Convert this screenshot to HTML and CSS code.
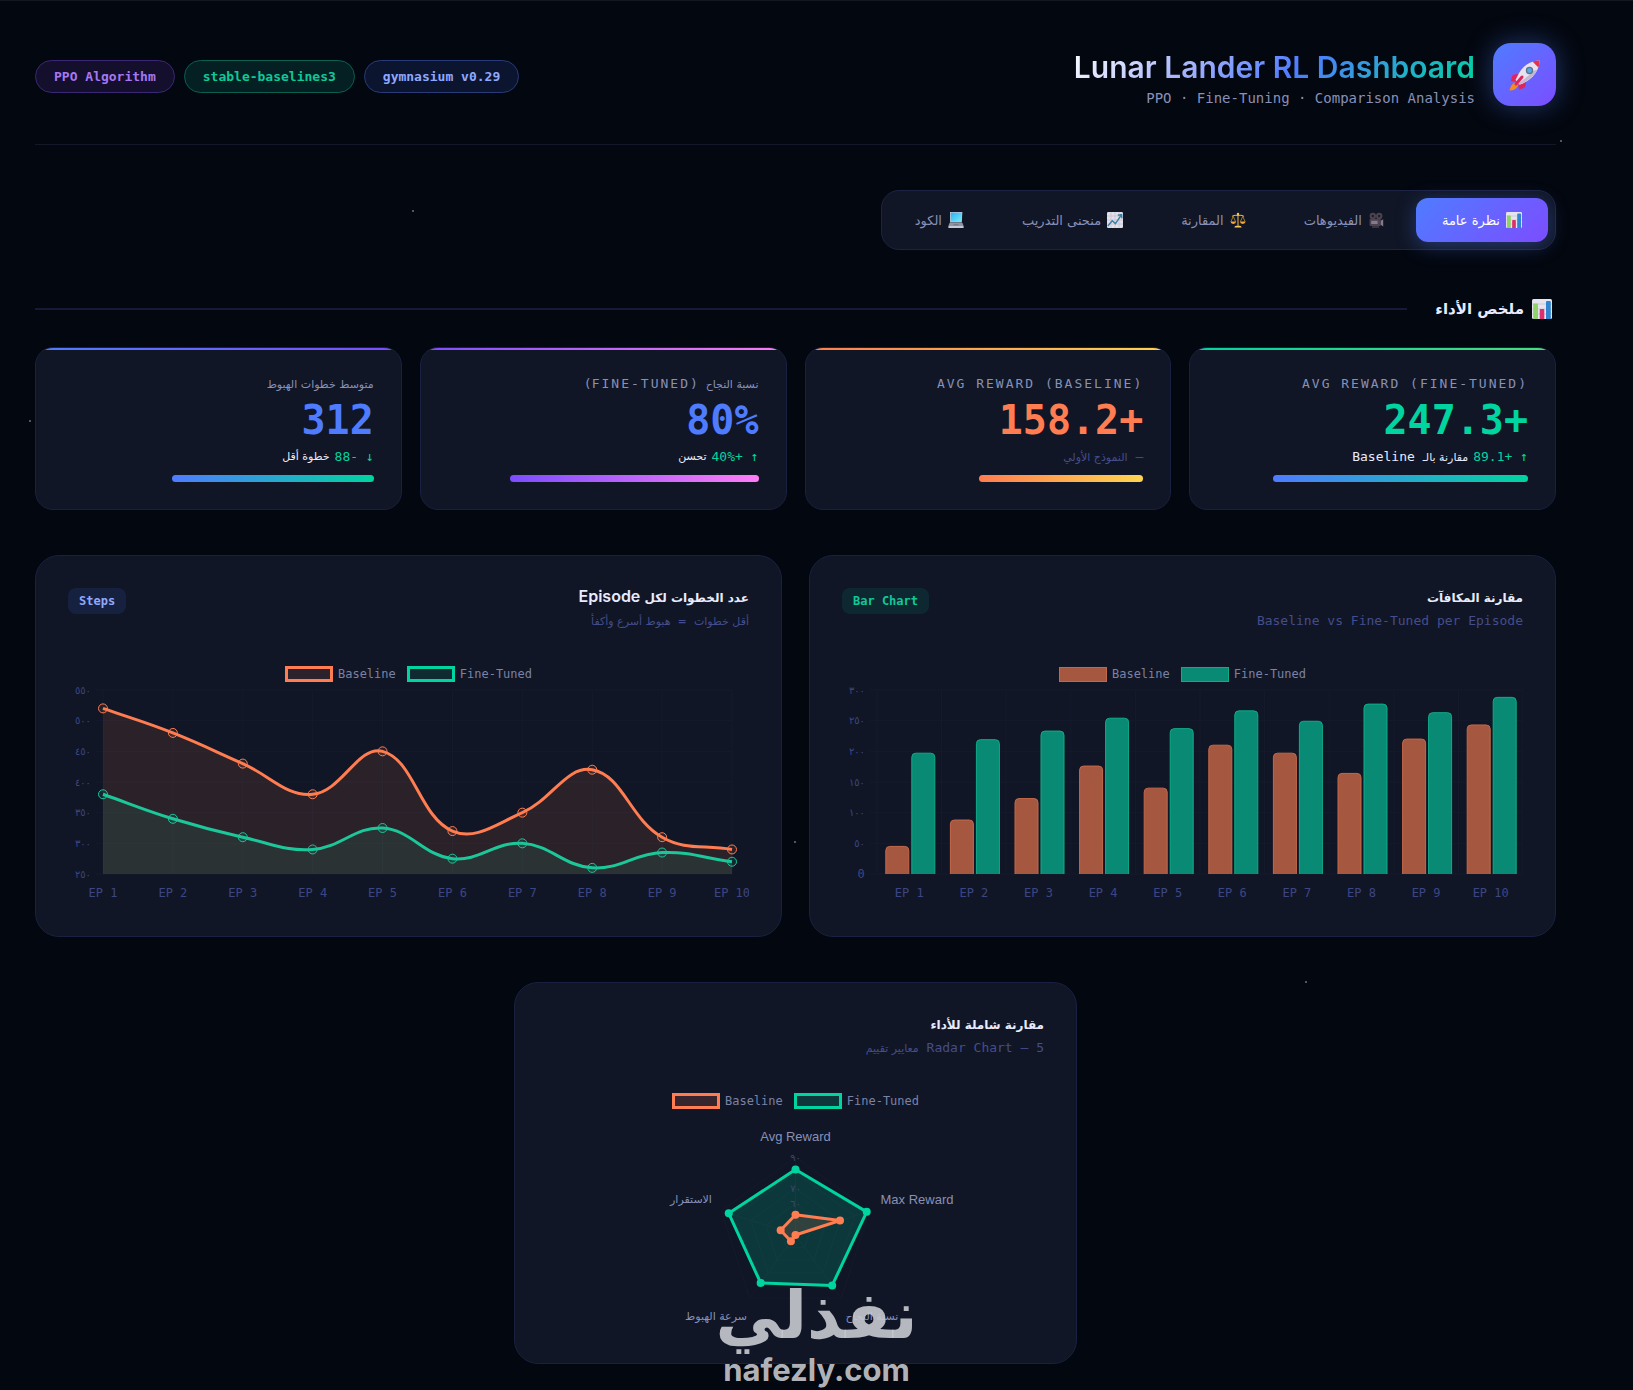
FILE: index.html
```html
<!DOCTYPE html>
<html lang="ar" dir="rtl">
<head>
<meta charset="utf-8">
<meta name="viewport" content="width=device-width, initial-scale=1">
<title>Lunar Lander RL Dashboard</title>
<link rel="stylesheet" href="styles.css">
</head>
<body>
<svg class="defs" width="0" height="0" aria-hidden="true">
  <defs>
    <linearGradient id="screen" x1="0" y1="0" x2="1" y2="1"><stop offset="0" stop-color="#27b4f5"/><stop offset="1" stop-color="#7fe6f7"/></linearGradient>
    <symbol id="icon-bars" viewBox="0 0 20 20">
      <rect width="20" height="20" rx="1.5" fill="#e6e4ee"/>
      <path d="M0 5h20M0 10h20M0 15h20" stroke="#c6c3d4" stroke-width=".8"/>
      <path d="M1.2 20V5.5Q1.2 4.5 2.2 4.5H5Q6 4.500 6 5.500V20z" fill="#8fd16a"/>
      <path d="M7.700 20v-9q0-1 1-1h2.600q1 0 1 1v9z" fill="#dc2f6e"/>
      <path d="M14 20V3q0-1 1-1h2.800q1 0 1 1v17z" fill="#2d86cf"/>
    </symbol>
    <symbol id="icon-camera" viewBox="0 0 20 20">
      <circle cx="6" cy="5" r="4" fill="#4c4250"/><circle cx="14" cy="5" r="4" fill="#4c4250"/>
      <circle cx="6" cy="5" r="1.500" fill="#211d28"/><circle cx="14" cy="5" r="1.500" fill="#211d28"/>
      <rect x="2" y="8.500" width="14" height="9" rx="1.500" fill="#4c4352"/>
      <rect x="4" y="11" width="8" height="4" fill="#857b8b"/>
      <path d="M16 11l3-2v9l-3-2z" fill="#857b8b"/><path d="M5 17.500h9V20H5z" fill="#3a3340"/>
    </symbol>
    <symbol id="icon-scales" viewBox="0 0 20 20">
      <g fill="none" stroke="#f0b23c" stroke-width="1.300"><path d="M10 2v15M2.500 5.500Q6 3.200 10 4.500 14 3.200 17.500 5.500"/><path d="M4 5.500L1.200 12M4 5.500L7 12M16 5.500L13 12M16 5.500L18.800 12" stroke-width=".8"/></g>
      <circle cx="10" cy="2.500" r="1.500" fill="#f7c75a"/>
      <path d="M.5 12h7.200q-.5 3-3.600 3T.5 12zM12.300 12h7.200q-.5 3-3.600 3t-3.600-3z" fill="#f5a83a"/>
      <path d="M5.500 19.500q0-2.500 4.500-2.500t4.500 2.500z" fill="#f7c75a"/>
    </symbol>
    <symbol id="icon-trend" viewBox="0 0 20 20">
      <rect width="20" height="20" rx="1.500" fill="#e2e0ea"/>
      <path d="M0 5h20M0 10h20M0 15h20M5 0v20M10 0v20M15 0v20" stroke="#c0bdcd" stroke-width=".8"/>
      <path d="M1 17.500L6.500 11l4 3.500L18 3.500M13.500 4l4.700-.7.4 4.700" fill="none" stroke="#3c7fa6" stroke-width="1.800"/>
    </symbol>
    <symbol id="icon-laptop" viewBox="0 0 20 20">
      <path d="M2.500 0h15.500l-.8 13H2.500z" fill="#b9c3d1"/><path d="M3.500 1h13.500l-.7 11H3.500z" fill="url(#screen)"/>
      <path d="M2 13.500h16l1.500 4H.5z" fill="#8e94a5"/><path d="M.5 17.500h19V20H.5z" fill="#c6c8d3"/><path d="M7 16h6" stroke="#61677a"/>
    </symbol>
    <symbol id="icon-rocket" viewBox="0 0 32 32">
      <path d="M7 23q-5 1-6.500 8.500Q7 31.500 9.500 26z" fill="#f58a1f"/>
      <path d="M10 15Q5 14.500 3 17l-1 5 7 1zM17 22q.5 5-2 7l-5 1.500-1-7z" fill="#e0245e"/>
      <path d="M8 18Q13 7 21.500 3.500 27 1 30.500 1.500 31 5 28.500 10.500 25 19 14 24.500L11 25.500 6.500 21z" fill="#e9e2ee"/>
      <path d="M10 26Q24 20 28.500 10.500L24 12Q18 19 9 24z" fill="#c2b8cf"/>
      <path d="M23.500 2.600Q28 1 30.500 1.500 31 4.500 29.300 8.500z" fill="#e23350"/>
      <circle cx="20.500" cy="11.500" r="3.700" fill="#5c728e"/><circle cx="20.500" cy="11.500" r="2.400" fill="#55a9e5"/>
      <path d="M13 18l-6 7" stroke="#e0245e" stroke-width="3" stroke-linecap="round"/>
    </symbol>
  </defs>
</svg>

<i class="star star-1"></i><i class="star star-2"></i><i class="star star-3"></i><i class="star star-4"></i><i class="star star-5"></i>

<div class="page">
  <header class="top">
    <div class="brand">
      <div class="logo"><svg viewBox="0 0 32 32" aria-hidden="true"><use href="#icon-rocket"/></svg></div>
      <div class="brand-text">
        <h1 dir="ltr">Lunar Lander RL Dashboard</h1>
        <p class="mono" dir="ltr">PPO · Fine-Tuning · Comparison Analysis</p>
      </div>
    </div>
    <div class="badges mono">
      <span class="badge badge-blue">gymnasium v0.29</span>
      <span class="badge badge-green">stable-baselines3</span>
      <span class="badge badge-purple">PPO Algorithm</span>
    </div>
  </header>

  <nav class="tabs">
    <button class="tab active" type="button"><svg class="icon"><use href="#icon-bars"/></svg>نظرة عامة</button>
    <button class="tab" type="button"><svg class="icon"><use href="#icon-camera"/></svg>الفيديوهات</button>
    <button class="tab" type="button"><svg class="icon"><use href="#icon-scales"/></svg>المقارنة</button>
    <button class="tab" type="button"><svg class="icon"><use href="#icon-trend"/></svg>منحنى التدريب</button>
    <button class="tab" type="button"><svg class="icon"><use href="#icon-laptop"/></svg>الكود</button>
  </nav>

  <main>
    <h2 class="section-title"><svg class="icon"><use href="#icon-bars"/></svg>ملخص الأداء</h2>

    <section class="stats">
      <article class="stat stat-green">
        <div class="label mono">Avg Reward (Fine-Tuned)</div>
        <div class="value mono">+247.3</div>
        <div class="change mono"><span class="delta">↑ +89.1</span><span><span class="ar">مقارنة بالـ</span> Baseline</span></div>
        <div class="progress"><div class="fill" style="width:82%"></div></div>
      </article>
      <article class="stat stat-orange">
        <div class="label mono">Avg Reward (Baseline)</div>
        <div class="value mono">+158.2</div>
        <div class="change mono muted"><span>— <span class="ar">النموذج الأولي</span></span></div>
        <div class="progress"><div class="fill" style="width:53%"></div></div>
      </article>
      <article class="stat stat-pink">
        <div class="label mono"><span class="ar">نسبة النجاح</span> (Fine-Tuned)</div>
        <div class="value mono">80%</div>
        <div class="change mono"><span class="delta">↑ +40%</span><span class="ar">تحسن</span></div>
        <div class="progress"><div class="fill" style="width:80%"></div></div>
      </article>
      <article class="stat stat-blue">
        <div class="label mono"><span class="ar">متوسط خطوات الهبوط</span></div>
        <div class="value mono">312</div>
        <div class="change mono"><span class="delta">↓ -88</span><span class="ar">خطوة أقل</span></div>
        <div class="progress"><div class="fill" style="width:65%"></div></div>
      </article>
    </section>

    <section class="charts">
      <article class="card">
        <div class="card-head">
          <div><h3>مقارنة المكافآت</h3><p class="mono">Baseline vs Fine-Tuned per Episode</p></div>
          <span class="tag tag-green mono">Bar Chart</span>
        </div>
        <div class="legend mono solid" dir="ltr"><span><i class="box base"></i>Baseline</span><span><i class="box tuned"></i>Fine-Tuned</span></div>
        <svg class="chart" id="bar-chart" viewBox="0 0 681 220"></svg>
      </article>
      <article class="card">
        <div class="card-head">
          <div><h3>عدد الخطوات لكل <span class="latin">Episode</span></h3><p class="mono"><span class="ar">أقل خطوات</span> = <span class="ar">هبوط أسرع وأكفأ</span></p></div>
          <span class="tag tag-blue mono">Steps</span>
        </div>
        <div class="legend mono" dir="ltr"><span><i class="box base"></i>Baseline</span><span><i class="box tuned"></i>Fine-Tuned</span></div>
        <svg class="chart" id="line-chart" viewBox="0 0 681 220"></svg>
      </article>
    </section>

    <section class="radar-row">
      <article class="card">
        <div class="card-head">
          <div><h3>مقارنة شاملة للأداء</h3><p class="mono">Radar Chart — 5 <span class="ar">معايير تقييم</span></p></div>
        </div>
        <div class="legend mono deep" dir="ltr"><span><i class="box base"></i>Baseline</span><span><i class="box tuned"></i>Fine-Tuned</span></div>
        <svg class="chart" id="radar-chart" viewBox="0 0 497 220"></svg>
      </article>
    </section>
  </main>
</div>
<div class="watermark"><span class="wm-ar">نفذلي</span><span class="wm-en" dir="ltr">nafezly.com</span></div>
<script src="charts.js"></script>
</body>
</html>
```

FILE: styles.css
```css
* { box-sizing: border-box; }
body {
  margin: 0;
  position: relative;
  border-top: 1px solid #14171d;
  background: #03070f;
  color: #e8ebff;
  font-family: Inter, "DejaVu Sans", sans-serif;
  font-size: 14px;
}
h1, h2, h3, p { margin: 0; }
.defs { position: absolute; }
.mono { font-family: "DejaVu Sans Mono", monospace; }
.ar { font-family: "DejaVu Sans", sans-serif; font-size: 11px; letter-spacing: 0; }
p .ar, .label .ar, .change span .ar { line-height: 0; }
.page { padding: 42px 77px 25px 35px; }

.star { position: absolute; width: 2px; height: 2px; border-radius: 50%; background: #6d7280; }
.star-1 { left: 1.800%; top: 419px; }
.star-2 { left: 25.200%; top: 209px; }
.star-3 { left: 95.500%; top: 139px; }
.star-4 { left: 48.600%; top: 840px; }
.star-5 { left: 79.900%; top: 980px; }

.top {
  display: flex;
  justify-content: space-between;
  align-items: center;
  padding-bottom: 38px;
  border-bottom: 1px solid #131829;
}
.brand { display: flex; align-items: center; gap: 18px; height: 63px; }
.logo {
  display: grid;
  place-items: center;
  width: 63px;
  height: 63px;
  border-radius: 18px;
  background: linear-gradient(135deg, #4f7cff, #7c4dff);
  box-shadow: 0 0 28px rgba(79, 124, 255, .4);
}
.logo svg { width: 32px; height: 32px; }
.brand-text { display: flex; flex-direction: column; align-items: flex-start; padding-top: 10px; }
h1 {
  font-size: 30px;
  line-height: 36px;
  font-weight: 600;
  background: linear-gradient(135deg, #fff 0%, #a5b4fc 30%, #4f7cff 55%, #00d4a0 100%);
  -webkit-background-clip: text;
  background-clip: text;
  color: transparent;
}
.brand-text p { font-size: 14px; line-height: 26px; color: #8890b8; }
.badges { display: flex; gap: 9px; padding-top: 4px; font-size: 13px; font-weight: 700; }
.badge { padding: 0 18px; line-height: 31px; border: 1px solid; border-radius: 17px; }
.badge-blue { color: #8fa8ff; background: #0b1530; border-color: #293a78; }
.badge-green { color: #10c898; background: #042023; border-color: #0a5f51; }
.badge-purple { color: #a577f2; background: #140f2c; border-color: #3b2775; }

.tabs {
  display: flex;
  gap: 6px;
  width: fit-content;
  margin: 45px 0 44px;
  padding: 7px;
  border: 1px solid #1d2443;
  border-radius: 18px;
  background: #101625;
}
.tab {
  display: flex;
  align-items: center;
  gap: 6px;
  height: 44px;
  padding: 0 26px;
  border: 0;
  border-radius: 12px;
  background: none;
  color: #8890b8;
  font: 13px "DejaVu Sans", sans-serif;
}
.tab.active {
  color: #fff;
  background: linear-gradient(135deg, #4f7cff, #7c4dff);
  box-shadow: 0 4px 20px rgba(79, 124, 255, .35);
}
.icon { width: 16px; height: 16px; flex: none; }

.section-title {
  display: flex;
  align-items: center;
  gap: 8px;
  height: 30px;
  margin-bottom: 23px;
  padding-right: 4px;
  font: 700 15px "DejaVu Sans", sans-serif;
}
.section-title .icon { width: 20px; height: 20px; }
.section-title::after { content: ""; flex: 1; height: 2px; margin-right: 20px; background: #161a38; }

.stats { display: grid; grid-template-columns: repeat(4, 1fr); gap: 18px; }
.stat {
  position: relative;
  display: flex;
  flex-direction: column;
  gap: 8px;
  padding: 28px 27px 27px;
  overflow: hidden;
  border: 1px solid #1a2140;
  border-radius: 18px;
  background: #101625;
}
.stat::before { content: ""; position: absolute; inset: 0 0 auto; height: 2px; background: var(--edge); }
.label { height: 16px; font-size: 13px; line-height: 16px; letter-spacing: 2px; text-transform: uppercase; color: #8890b8; }
.value { font-size: 40px; line-height: 40px; font-weight: 700; color: var(--tone); }
.change { display: flex; gap: 5px; height: 18px; font-size: 13px; line-height: 18px; }
.delta { color: #00d4a0; }
.muted { color: #454d8c; }
.progress { padding-top: 1px; }
.fill { height: 7px; border-radius: 4px; background: var(--bar); }
.stat-green { --tone: #00d4a0; --edge: linear-gradient(90deg, #00d4a0, #4ade80); --bar: linear-gradient(90deg, #4f7cff, #00d4a0); }
.stat-orange { --tone: #ff7d50; --edge: linear-gradient(90deg, #ff7d50, #ffd54f); --bar: linear-gradient(90deg, #ff7d50, #ffd54f); }
.stat-pink { --tone: #4f7cff; --edge: linear-gradient(90deg, #7c4dff, #ff7df5); --bar: linear-gradient(90deg, #7c4dff, #ff7df5); }
.stat-blue { --tone: #4f7cff; --edge: linear-gradient(90deg, #4f7cff, #7c4dff); --bar: linear-gradient(90deg, #4f7cff, #00d4a0); }

.charts { display: grid; grid-template-columns: 1fr 1fr; gap: 27px; margin: 45px 0; }
.card { padding: 32px; border: 1px solid #1a2140; border-radius: 24px; background: #101625; }
.card-head { display: flex; justify-content: space-between; align-items: flex-start; margin-bottom: 34px; }
h3 { font: 700 12px/20px "DejaVu Sans", sans-serif; }
h3 .latin { font: 600 16px/0 Inter, sans-serif; }
.card-head p { margin-top: 4px; font-size: 13px; line-height: 18px; color: #454d8c; }
.tag { padding: 0 11px; border-radius: 8px; font-size: 12px; line-height: 26px; font-weight: 700; }
.tag-green { color: #10c898; background: #0e2832; }
.tag-blue { color: #8fa8ff; background: #162140; }

.legend { display: flex; justify-content: center; gap: 11px; height: 20px; font-size: 12px; color: #7a82a8; }
.legend span { display: flex; align-items: center; gap: 5px; }
.box { width: 48px; height: 16px; border: 3px solid; }
.base { border-color: #ff7d50; background: #2b222b; }
.tuned { border-color: #00d4a0; background: #102a31; }
.deep .base { background: #38262e; }
.deep .tuned { background: #0e363b; }
.solid .box { height: 15px; border-width: 1px; }
.solid .base { border-color: #c4684a; background: #a55740; }
.solid .tuned { border-color: #10ac88; background: #088a74; }
.chart { display: block; width: 100%; height: auto; }
.chart text { font: 12px "DejaVu Sans Mono", monospace; fill: #3d4685; text-anchor: middle; dominant-baseline: central; }
.chart .tick { font: 10px "DejaVu Sans", sans-serif; text-anchor: end; direction: ltr; }
.chart .axis { font: 13px "Liberation Sans", sans-serif; fill: #8890b8; }
.chart .axis-ar { font: 11px "DejaVu Sans", sans-serif; fill: #8890b8; }
.chart .ring-label { font: 10px "DejaVu Sans", sans-serif; fill: #3a4570; }
.grid { fill: none; stroke: #151b2c; }

.radar-row { display: flex; justify-content: center; }
.radar-row .card { width: 563px; max-width: 100%; }
.watermark {
  position: absolute;
  left: 0;
  right: 0;
  bottom: 1px;
  display: flex;
  flex-direction: column;
  align-items: center;
  color: rgba(200, 202, 208, .9);
  pointer-events: none;
}
.wm-ar { font: 700 66px/72px "DejaVu Sans", sans-serif; }
.wm-en { font: 700 31px/36px Inter, sans-serif; }
```

FILE: charts.js
```js
const ORANGE = '#ff7d50', GREEN = '#00d4a0';
const arabic = n => String(n).replace(/\d/g, d => '٠١٢٣٤٥٦٧٨٩'[d]);
const line = (x1, y1, x2, y2) => `<path class="grid" d="M${x1} ${y1}L${x2} ${y2}"/>`;
const top0 = 6, base0 = 190, left0 = 35;

function barChart() {
  const baseline = [45, 88, 123, 176, 140, 210, 197, 164, 220, 243];
  const tuned = [197, 219, 233, 254, 237, 266, 249, 277, 263, 288];
  const step = (681 - left0) / 10;
  const y = v => base0 - v / 300 * (base0 - top0);
  let out = '';
  for (let v = 0; v <= 300; v += 50) {
    out += line(left0 - 7, y(v), 681, y(v));
    out += v ? `<text class="tick" x="23" y="${y(v)}">${arabic(v)}</text>` : `<text x="19" y="${y(v)}">0</text>`;
  }
  for (let i = 0; i <= 10; i++) out += line(left0 + i * step, top0, left0 + i * step, base0);
  const bar = (x, v, fill, stroke) =>
    `<path d="M${x} ${base0}V${y(v) + 4}q0 -4 4 -4h15q4 0 4 4V${base0}" fill="${fill}" stroke="${stroke}"/>`;
  for (let i = 0; i < 10; i++) {
    const c = left0 + (i + .5) * step;
    out += bar(c - 23.5, baseline[i], '#a55740', '#c4684a') + bar(c + 2.5, tuned[i], '#088a74', '#10ac88');
    out += `<text x="${c}" y="209">EP ${i + 1}</text>`;
  }
  document.getElementById('bar-chart').innerHTML = out;
}

/* Cubic segments whose handles scale with the distance to each neighbour. */
function spline(pts) {
  const handles = pts.map((p, i) => {
    const a = pts[i - 1] || p, b = pts[i + 1] || p;
    const d1 = Math.hypot(p[0] - a[0], p[1] - a[1]), d2 = Math.hypot(b[0] - p[0], b[1] - p[1]);
    const f1 = .4 * d1 / (d1 + d2), f2 = .4 * d2 / (d1 + d2);
    return [p[0] - f1 * (b[0] - a[0]), p[1] - f1 * (b[1] - a[1]), p[0] + f2 * (b[0] - a[0]), p[1] + f2 * (b[1] - a[1])];
  });
  return pts.slice(1).reduce((d, p, i) =>
    `${d}C${handles[i][2]} ${handles[i][3]} ${handles[i + 1][0]} ${handles[i + 1][1]} ${p[0]} ${p[1]}`, `M${pts[0][0]} ${pts[0][1]}`);
}

function lineChart() {
  const step = (664 - left0) / 9;
  const y = v => base0 - (v - 250) / 300 * (base0 - top0);
  const series = [
    [[380, 340, 310, 290, 325, 275, 300, 260, 285, 270], '#1cc79a'],
    [[520, 480, 430, 380, 450, 320, 350, 420, 310, 290], ORANGE]
  ].map(([vals, color]) => ({ color, pts: vals.map((v, i) => [left0 + i * step, y(v)]) }));
  let out = '';
  for (let v = 250; v <= 550; v += 50) {
    out += line(left0 - 7, y(v), 664, y(v)) + `<text class="tick" x="23" y="${y(v)}">${arabic(v)}</text>`;
  }
  for (let i = 0; i < 10; i++) {
    out += line(left0 + i * step, top0, left0 + i * step, base0);
    out += `<text x="${left0 + i * step}" y="209">EP ${i + 1}</text>`;
  }
  for (const s of series) out += `<path d="${spline(s.pts)}V${base0}H${left0}z" fill="${s.color}" fill-opacity=".11"/>`;
  for (const s of series) {
    out += `<path d="${spline(s.pts)}" fill="none" stroke="${s.color}" stroke-width="3"/>`;
    for (const [px, py] of s.pts) out += `<circle cx="${px}" cy="${py}" r="4.5" fill="${s.color}" fill-opacity=".1" stroke="${s.color}"/>`;
  }
  document.getElementById('line-chart').innerHTML = out;
}

function radarChart() {
  const cx = 248.5, cy = 124, unit = 1.56;
  const at = (v, i) => {
    const a = -Math.PI / 2 + i * Math.PI * 2 / 5, r = (v - 40) * unit;
    return [cx + r * Math.cos(a), cy + r * Math.sin(a)];
  };
  let out = '';
  for (let v = 50; v <= 90; v += 10) out += `<polygon class="grid" points="${[0, 1, 2, 3, 4].map(i => at(v, i)).join(' ')}"/>`;
  for (let i = 0; i < 5; i++) out += line(cx, cy, ...at(90, i));
  const shape = (vals, color, opacity) => {
    const pts = vals.map(at);
    return `<polygon points="${pts.join(' ')}" fill="${color}" fill-opacity="${opacity}" stroke="${color}" stroke-width="3" stroke-linejoin="round"/>` +
      pts.map(p => `<circle cx="${p[0]}" cy="${p[1]}" r="4" fill="${color}"/>`).join('');
  };
  out += shape([82, 88, 80, 78, 85], GREEN, .18) + shape([53, 70, 40, 45, 50], ORANGE, .15);
  for (const v of [60, 70, 90]) out += `<text class="ring-label" x="${cx}" y="${at(v, 0)[1]}">${arabic(v)}</text>`;
  out += `<text class="axis" x="${cx}" y="25">Avg Reward</text><text class="axis" x="370" y="88">Max Reward</text>`;
  out += '<text class="axis-ar" x="144" y="88">الاستقرار</text><text class="axis-ar" x="169" y="205">سرعة الهبوط</text><text class="axis-ar" x="325" y="205">نسبة النجاح</text>';
  document.getElementById('radar-chart').innerHTML = out;
}

barChart();
lineChart();
radarChart();
```
